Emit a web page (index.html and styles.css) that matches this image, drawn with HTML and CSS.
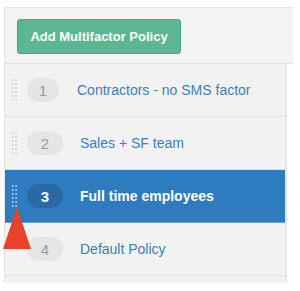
FILE: index.html
```html
<!DOCTYPE html>
<html>
<head>
<meta charset="utf-8">
<link rel="stylesheet" href="styles.css">
</head>
<body>
<div class="panel">
  <div class="header">
    <button class="add-btn">Add Multifactor Policy</button>
  </div>
  <ul class="list">
    <li class="row">
      <span class="handle"></span>
      <span class="badge narrow">1</span>
      <span class="name">Contractors - no SMS factor</span>
    </li>
    <li class="row">
      <span class="handle"></span>
      <span class="badge">2</span>
      <span class="name">Sales + SF team</span>
    </li>
    <li class="row selected">
      <span class="handle"></span>
      <span class="badge">3</span>
      <span class="name">Full time employees</span>
    </li>
    <li class="row">
      <span class="handle hidden"></span>
      <span class="badge">4</span>
      <span class="name">Default Policy</span>
    </li>
    <li class="row stub"></li>
  </ul>
  <svg class="arrow" width="30" height="44" viewBox="0 0 30 44"><polygon points="14,0 0,42 28,42" fill="#e8422b"/></svg>
</div>
</body>
</html>
```
FILE: styles.css
```css
* { box-sizing: border-box; }
html, body { margin: 0; padding: 0; background: #fff; }
body { width: 300px; height: 291px; overflow: hidden; font-family: "Liberation Sans", Arial, sans-serif; }
.panel { position: relative; margin: 7px 0 0 4px; width: 289px; }
.header {
  background: #f3f3f3;
  border-top: 1px solid #e4e4e4;
  border-left: 1px solid #e4e4e4;
  border-bottom: 1px solid #e2e2e2;
  height: 57px;
  padding: 11px 0 0 12px;
}
.add-btn {
  display: block;
  height: 35px;
  width: 164px;
  background: #5db692;
  border: 1px solid #4fa583;
  border-radius: 3px;
  color: #fff;
  font-family: "Liberation Sans", Arial, sans-serif;
  font-weight: bold;
  font-size: 13px;
  padding: 0;
  text-align: center;
}
.list { list-style: none; margin: 0; padding: 0; width: 283px; border-right: 2px solid #e6e6e6; border-left: 1px solid #e4e4e4; }
.row {
  display: flex;
  align-items: center;
  height: 53px;
  background: #f2f2f2;
  border-bottom: 1px solid #e1e1e1;
  padding-left: 6px;
}
.row.stub { height: 7px; border-bottom: none; }
.handle {
  width: 7px;
  height: 25px;
  background-image: radial-gradient(circle, #d6d6d6 1px, transparent 1.3px);
  background-size: 3.5px 4px;
  margin-right: 9px;
}
.handle.hidden { background-image: none; }
.badge {
  width: 36px;
  height: 24px;
  border-radius: 12px;
  background: #e5e5e5;
  color: #9a9a9a;
  font-size: 15px;
  display: flex;
  align-items: center;
  justify-content: center;
  margin-right: 17px;
}
.badge.narrow { width: 32px; margin-right: 18px; }
.name { color: #3b7fc0; font-size: 14px; }
.row.selected { background: #2e7bbf; border-bottom-color: #6aa1d2; }
.row.selected .handle { background-image: radial-gradient(circle, #9dc2e3 1px, transparent 1.3px); }
.row.selected .badge { background: #2a69a6; color: #fff; font-weight: bold; }
.row.selected .name { color: #fff; font-weight: bold; }
.arrow { position: absolute; left: -1px; top: 200px; }
```
